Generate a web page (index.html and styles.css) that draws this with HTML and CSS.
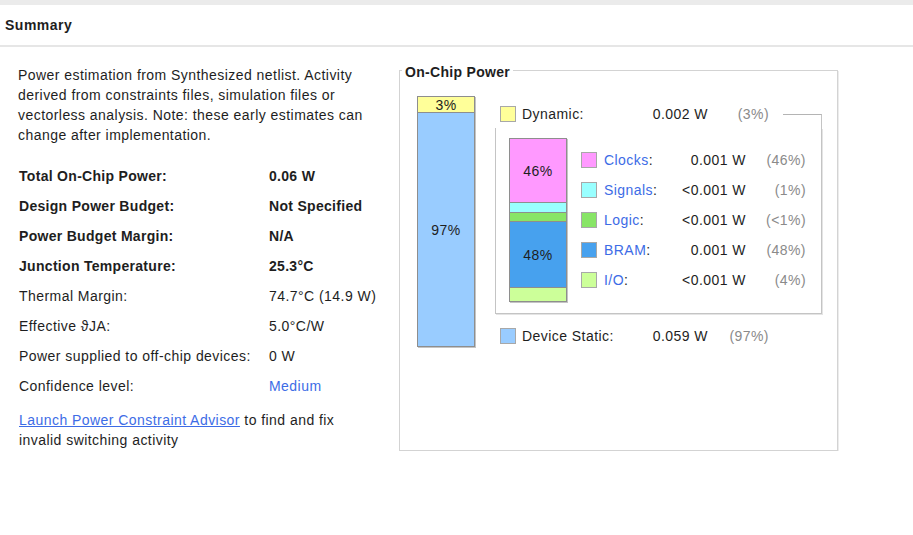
FILE: index.html
```html
<!DOCTYPE html>
<html>
<head>
<meta charset="utf-8">
<title>Summary</title>
<link rel="stylesheet" href="styles.css">
</head>
<body>
<div class="topband"></div>
<div class="header">Summary</div>
<div class="content">
  <div class="left">
    <p class="intro">Power estimation from Synthesized netlist. Activity derived from constraints files, simulation files or vectorless analysis. Note: these early estimates can change after implementation.</p>
    <div class="stats">
      <div class="k b">Total On-Chip Power:</div><div class="v b">0.06 W</div>
      <div class="k b">Design Power Budget:</div><div class="v b">Not Specified</div>
      <div class="k b">Power Budget Margin:</div><div class="v b">N/A</div>
      <div class="k b">Junction Temperature:</div><div class="v b">25.3°C</div>
      <div class="k">Thermal Margin:</div><div class="v">74.7°C (14.9 W)</div>
      <div class="k">Effective ϑJA:</div><div class="v">5.0°C/W</div>
      <div class="k">Power supplied to off-chip devices:</div><div class="v">0 W</div>
      <div class="k">Confidence level:</div><div class="v link-plain">Medium</div>
    </div>
    <p class="advisor"><a class="link" href="#">Launch Power Constraint Advisor</a> to find and fix invalid switching activity</p>
  </div>
  <fieldset class="chip">
    <legend class="chip-title">On-Chip Power</legend>
    <div class="chip-body">
      <div class="bar big">
        <div class="seg c-dyn h-dyn">3%</div>
        <div class="seg c-static h-static">97%</div>
      </div>
      <div class="breakdown">
        <div class="row-main">
          <span class="sw c-dyn"></span>
          <span class="lbl">Dynamic:</span>
          <span class="val">0.002 W</span>
          <span class="pct">(3%)</span>
          <span class="bracket"></span>
        </div>
        <div class="dynbox">
          <div class="bar small">
            <div class="seg c-clk h-clk">46%</div>
            <div class="seg c-sig h-sig"></div>
            <div class="seg c-log h-log"></div>
            <div class="seg c-bram h-bram">48%</div>
            <div class="seg c-io h-io"></div>
          </div>
          <div class="dynlist">
            <div class="row-sub"><span class="sw c-clk"></span><span class="sub-lbl"><span class="blue">Clocks</span>:</span><span class="sub-val">0.001 W</span><span class="sub-pct">(46%)</span></div>
            <div class="row-sub"><span class="sw c-sig"></span><span class="sub-lbl"><span class="blue">Signals</span>:</span><span class="sub-val">&lt;0.001 W</span><span class="sub-pct">(1%)</span></div>
            <div class="row-sub"><span class="sw c-log"></span><span class="sub-lbl"><span class="blue">Logic</span>:</span><span class="sub-val">&lt;0.001 W</span><span class="sub-pct">(&lt;1%)</span></div>
            <div class="row-sub"><span class="sw c-bram"></span><span class="sub-lbl"><span class="blue">BRAM</span>:</span><span class="sub-val">0.001 W</span><span class="sub-pct">(48%)</span></div>
            <div class="row-sub"><span class="sw c-io"></span><span class="sub-lbl"><span class="blue">I/O</span>:</span><span class="sub-val">&lt;0.001 W</span><span class="sub-pct">(4%)</span></div>
          </div>
        </div>
        <div class="row-main static-row">
          <span class="sw c-static"></span>
          <span class="lbl">Device Static:</span>
          <span class="val">0.059 W</span>
          <span class="pct">(97%)</span>
        </div>
      </div>
    </div>
  </fieldset>
</div>
</body>
</html>
```
FILE: styles.css
```css
html, body {
  margin: 0;
  padding: 0;
  background: #ffffff;
}
body {
  font-family: "Liberation Sans", Arial, sans-serif;
  font-size: 14px;
  letter-spacing: 0.45px;
  color: #1e1e1e;
}
.topband {
  height: 5px;
  background: #ebebeb;
}
.header {
  height: 40px;
  line-height: 40px;
  padding-left: 5px;
  font-weight: bold;
  letter-spacing: 0.5px;
  border-bottom: 2px solid #e6e6e6;
}
.content {
  display: flex;
  align-items: flex-start;
}
.left {
  width: 381px;
  padding-left: 18px;
  flex: none;
}
.intro {
  margin: 18px 0 0;
  line-height: 20px;
  width: 370px;
}
.stats {
  display: grid;
  grid-template-columns: 250px auto;
  grid-auto-rows: 30px;
  align-items: center;
  margin-top: 16px;
  padding-left: 1px;
}
.b {
  font-weight: bold;
  letter-spacing: 0.3px;
}
.link-plain { color: #3d6ce6; }
.advisor {
  margin: 9px 0 0;
  line-height: 20px;
  padding-left: 1px;
  width: 340px;
}
.link {
  color: #3d6ce6;
  text-decoration: underline;
}
.chip {
  margin: 13px 0 0;
  padding: 16px 0 0 17px;
  width: 439px;
  height: 391px;
  box-sizing: border-box;
  border: 1px solid #d3d3d3;
  box-shadow: 1px 1px 0 #ececec;
  min-width: 0;
}
.chip-title {
  font-weight: bold;
  letter-spacing: 0.3px;
  line-height: 16px;
  padding: 4px 3px 0;
  margin-left: -15px;
  background: #fff;
}
.chip-body {
  display: flex;
  align-items: flex-start;
  gap: 20px;
}
.bar {
  border: 1px solid #8e8e8e;
  box-shadow: 1px 1px 0 #c4c4c4;
  display: flex;
  flex-direction: column;
  flex: none;
}
.big { width: 56px; }
.small { width: 56px; }
.seg {
  display: flex;
  align-items: center;
  justify-content: center;
  color: #1e1e1e;
  line-height: 14px;
}
.seg + .seg { border-top: 1px solid #8e8e8e; }
.h-dyn { height: 15px; }
.h-static { height: 233px; }
.h-clk { height: 63px; }
.h-sig { height: 9px; }
.h-log { height: 8px; }
.h-bram { height: 65px; }
.h-io { height: 13px; }
.c-dyn { background: #ffff99; }
.c-static { background: #99ccff; }
.c-clk { background: #ff99ff; }
.c-sig { background: #99ffff; }
.c-log { background: #88e566; }
.c-bram { background: #47a1ee; }
.c-io { background: #ccff99; }
.breakdown {
  width: 327px;
  margin-top: 4px;
}
.row-main {
  display: flex;
  align-items: center;
  height: 28px;
}
.sw {
  width: 16px;
  height: 16px;
  box-sizing: border-box;
  border: 1px solid #a8a8a8;
  flex: none;
}
.row-main .sw { margin-left: 5px; }
.lbl {
  margin-left: 6px;
  width: 106px;
  white-space: nowrap;
}
.val {
  width: 80px;
  text-align: right;
  white-space: nowrap;
}
.pct {
  width: 61px;
  text-align: right;
  color: #8a8a8a;
}
.bracket {
  flex: 1;
  align-self: flex-end;
  height: 14px;
  margin-left: 14px;
  box-sizing: border-box;
  border-top: 1px solid #b4b4b4;
  border-right: 1px solid #c4c4c4;
}
.dynbox {
  display: flex;
  align-items: flex-start;
  border: 1px solid #c4c4c4;
  border-top: none;
  box-shadow: 1px 1px 0 #e4e4e4;
  padding: 10px 0 11px 13px;
}
.dynlist {
  margin-left: 14px;
  margin-top: 7px;
}
.row-sub {
  display: flex;
  align-items: center;
  height: 30px;
}
.sub-lbl {
  margin-left: 7px;
  width: 62px;
  white-space: nowrap;
}
.blue { color: #3d6ce6; }
.sub-val {
  width: 80px;
  text-align: right;
  white-space: nowrap;
}
.sub-pct {
  width: 60px;
  text-align: right;
  color: #8a8a8a;
}
.static-row { margin-top: 8px; }
```
